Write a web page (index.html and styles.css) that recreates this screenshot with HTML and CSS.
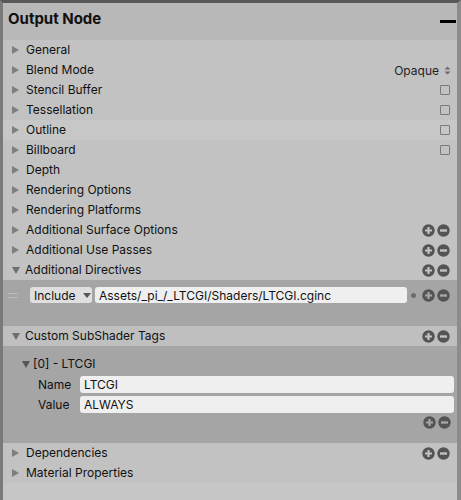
FILE: index.html
```html
<!DOCTYPE html>
<html>
<head>
<meta charset="utf-8">
<link rel="stylesheet" href="styles.css">
</head>
<body>
<div class="panel">
  <div class="header">
    <span class="title">Output Node</span>
    <span class="collapse"></span>
  </div>
  <div class="body">
    <div class="row"><span class="tri"></span><span class="label">General</span></div>
    <div class="row"><span class="tri"></span><span class="label">Blend Mode</span>
      <span class="popup-text">Opaque <svg class="updown" width="7" height="9" viewBox="0 0 7 9"><path d="M0.5 3.5 L3.5 0.5 L6.5 3.5 Z M0.5 5.5 L3.5 8.5 L6.5 5.5 Z" fill="#6a6a6a"/></svg></span></div>
    <div class="row"><span class="tri"></span><span class="label">Stencil Buffer</span><span class="check"></span></div>
    <div class="row"><span class="tri"></span><span class="label">Tessellation</span><span class="check"></span></div>
    <div class="row hover"><span class="tri"></span><span class="label">Outline</span><span class="check"></span></div>
    <div class="row"><span class="tri"></span><span class="label">Billboard</span><span class="check"></span></div>
    <div class="row"><span class="tri"></span><span class="label">Depth</span></div>
    <div class="row"><span class="tri"></span><span class="label">Rendering Options</span></div>
    <div class="row"><span class="tri"></span><span class="label">Rendering Platforms</span></div>
    <div class="row"><span class="tri"></span><span class="label">Additional Surface Options</span>
      <svg class="pm" width="29" height="13" viewBox="0 0 29 13"><circle cx="6.5" cy="6.5" r="6.2" fill="#545454"/><path d="M6.5 3 V10 M3 6.5 H10" stroke="#c2c2c2" stroke-width="2.2"/><circle cx="21.5" cy="6.5" r="6.2" fill="#545454"/><path d="M18 6.5 H25" stroke="#c2c2c2" stroke-width="2.4"/></svg></div>
    <div class="row"><span class="tri"></span><span class="label">Additional Use Passes</span>
      <svg class="pm" width="29" height="13" viewBox="0 0 29 13"><circle cx="6.5" cy="6.5" r="6.2" fill="#545454"/><path d="M6.5 3 V10 M3 6.5 H10" stroke="#c2c2c2" stroke-width="2.2"/><circle cx="21.5" cy="6.5" r="6.2" fill="#545454"/><path d="M18 6.5 H25" stroke="#c2c2c2" stroke-width="2.4"/></svg></div>
    <div class="row"><span class="tri down"></span><span class="label">Additional Directives</span>
      <svg class="pm" width="29" height="13" viewBox="0 0 29 13"><circle cx="6.5" cy="6.5" r="6.2" fill="#545454"/><path d="M6.5 3 V10 M3 6.5 H10" stroke="#c2c2c2" stroke-width="2.2"/><circle cx="21.5" cy="6.5" r="6.2" fill="#545454"/><path d="M18 6.5 H25" stroke="#c2c2c2" stroke-width="2.4"/></svg></div>

    <div class="directives">
      <div class="dir-row">
        <span class="handle"></span>
        <span class="popup">Include <span class="arrow"></span></span>
        <span class="field path">Assets/_pi_/_LTCGI/Shaders/LTCGI.cginc</span>
        <span class="dot"></span>
        <svg class="pm dark" width="29" height="13" viewBox="0 0 29 13"><circle cx="6.5" cy="6.5" r="6.2" fill="#545454"/><path d="M6.5 3 V10 M3 6.5 H10" stroke="#a5a5a5" stroke-width="2.2"/><circle cx="21.5" cy="6.5" r="6.2" fill="#545454"/><path d="M18 6.5 H25" stroke="#a5a5a5" stroke-width="2.4"/></svg>
      </div>
    </div>

    <div class="row section"><span class="tri down"></span><span class="label">Custom SubShader Tags</span>
      <svg class="pm" width="29" height="13" viewBox="0 0 29 13"><circle cx="6.5" cy="6.5" r="6.2" fill="#545454"/><path d="M6.5 3 V10 M3 6.5 H10" stroke="#c2c2c2" stroke-width="2.2"/><circle cx="21.5" cy="6.5" r="6.2" fill="#545454"/><path d="M18 6.5 H25" stroke="#c2c2c2" stroke-width="2.4"/></svg></div>

    <div class="tags">
      <div class="item-row"><span class="tri down"></span><span class="label">[0] - LTCGI</span></div>
      <div class="prop-row"><span class="prop-label">Name</span><span class="field">LTCGI</span></div>
      <div class="prop-row"><span class="prop-label">Value</span><span class="field">ALWAYS</span></div>
      <div class="tags-foot">
        <svg class="pm" width="29" height="13" viewBox="0 0 29 13"><circle cx="6.5" cy="6.5" r="6.2" fill="#545454"/><path d="M6.5 3 V10 M3 6.5 H10" stroke="#a5a5a5" stroke-width="2.2"/><circle cx="21.5" cy="6.5" r="6.2" fill="#545454"/><path d="M18 6.5 H25" stroke="#a5a5a5" stroke-width="2.4"/></svg>
      </div>
    </div>

    <div class="row"><span class="tri"></span><span class="label">Dependencies</span>
      <svg class="pm" width="29" height="13" viewBox="0 0 29 13"><circle cx="6.5" cy="6.5" r="6.2" fill="#545454"/><path d="M6.5 3 V10 M3 6.5 H10" stroke="#c2c2c2" stroke-width="2.2"/><circle cx="21.5" cy="6.5" r="6.2" fill="#545454"/><path d="M18 6.5 H25" stroke="#c2c2c2" stroke-width="2.4"/></svg></div>
    <div class="row"><span class="tri"></span><span class="label">Material Properties</span></div>
    <div class="bottom"></div>
  </div>
</div>
</body>
</html>
```

FILE: styles.css
```css
* { box-sizing: border-box; }
html, body { margin: 0; padding: 0; }
body {
  width: 461px;
  height: 500px;
  overflow: hidden;
  background: #c2c2c2;
  font-family: Inter, "Noto Sans", sans-serif;
  font-size: 12px;
  color: #111;
}
.panel {
  width: 461px;
  height: 500px;
  border-top: 3px solid #585858;
  border-left: 3px solid #7a7a7a;
  border-right: 4px solid #8c8c8c;
  display: flex;
  flex-direction: column;
  background: #c2c2c2;
}
.header {
  height: 37px;
  flex: none;
  background: #b8b8b8;
  display: flex;
  align-items: center;
  padding-left: 5px;
  padding-right: 1px;
}
.title {
  font-weight: 700;
  font-size: 15px;
  flex: 1;
  color: #111;
  margin-top: -6px;
}
.collapse {
  width: 16px;
  height: 3px;
  background: #000;
}
.body { flex: 1; display: flex; flex-direction: column; }
.row {
  height: 20px;
  flex: none;
  display: flex;
  align-items: center;
  padding-left: 9px;
  padding-right: 6px;
}
.row.hover { background: #c7c7c7; }
.row.section { background: #bfbfbf; padding-right: 6px; }
.tri {
  width: 0; height: 0;
  border-left: 7px solid #7e7e7e;
  border-top: 4.5px solid transparent;
  border-bottom: 4.5px solid transparent;
  margin-right: 7px;
  flex: none;
}
.tri.down {
  border-left: 4.5px solid transparent;
  border-right: 4.5px solid transparent;
  border-top: 7px solid #6e6e6e;
  border-bottom: 0;
  margin-right: 5px;
}
.label { flex: 1; white-space: nowrap; margin-top: -1px; }
.popup-text { color: #222; display: flex; align-items: center; gap: 5px; margin-right: 0px; }
.updown { display: block; }
.check {
  width: 10px; height: 10px;
  border: 1px solid #7a7a7a;
  border-radius: 1px;
  margin-right: 1px;
}
.pm { display: block; flex: none; }
.directives {
  height: 46px;
  flex: none;
  background: #a5a5a5;
  padding-top: 7px;
}
.dir-row {
  height: 16px;
  display: flex;
  align-items: center;
  padding-right: 6px;
}
.handle {
  width: 10px;
  height: 5px;
  border-top: 1px solid #bcbcbc;
  border-bottom: 1px solid #bcbcbc;
  margin-left: 5px;
  margin-right: 12px;
  flex: none;
}
.popup {
  width: 62px;
  height: 16px;
  background: #dfdfdf;
  border-radius: 3px;
  display: flex;
  align-items: center;
  padding-left: 4px;
  flex: none;
  color: #111;
}
.popup .arrow {
  width: 0; height: 0;
  border-left: 4px solid transparent;
  border-right: 4px solid transparent;
  border-top: 5px solid #555;
  margin-left: 7px;
}
.field {
  height: 17px;
  background: #efefef;
  border-radius: 3px;
  display: flex;
  align-items: center;
  padding-left: 4px;
  color: #111;
  white-space: nowrap;
  overflow: hidden;
}
.field.path { width: 312px; margin-left: 3px; flex: none; height: 16px; }
.dot {
  width: 5px; height: 5px;
  border-radius: 50%;
  background: #6d6d6d;
  margin-left: 4px;
  margin-right: 6px;
  flex: none;
}
.tags {
  height: 97px;
  flex: none;
  background: #a5a5a5;
  padding-top: 8px;
}
.item-row {
  height: 20px;
  display: flex;
  align-items: center;
  padding-left: 19px;
}
.item-row .tri.down { border-top-color: #555; margin-right: 3px; }
.prop-row {
  height: 20px;
  display: flex;
  align-items: center;
  padding-left: 35px;
  padding-right: 3px;
}
.prop-label { width: 42px; flex: none; color: #111; }
.prop-row .field { flex: 1; }
.tags-foot {
  height: 16px;
  display: flex;
  justify-content: flex-end;
  align-items: center;
  padding-right: 5px;
}
.bottom { flex: 1; background: #c6c6c6; }
```
